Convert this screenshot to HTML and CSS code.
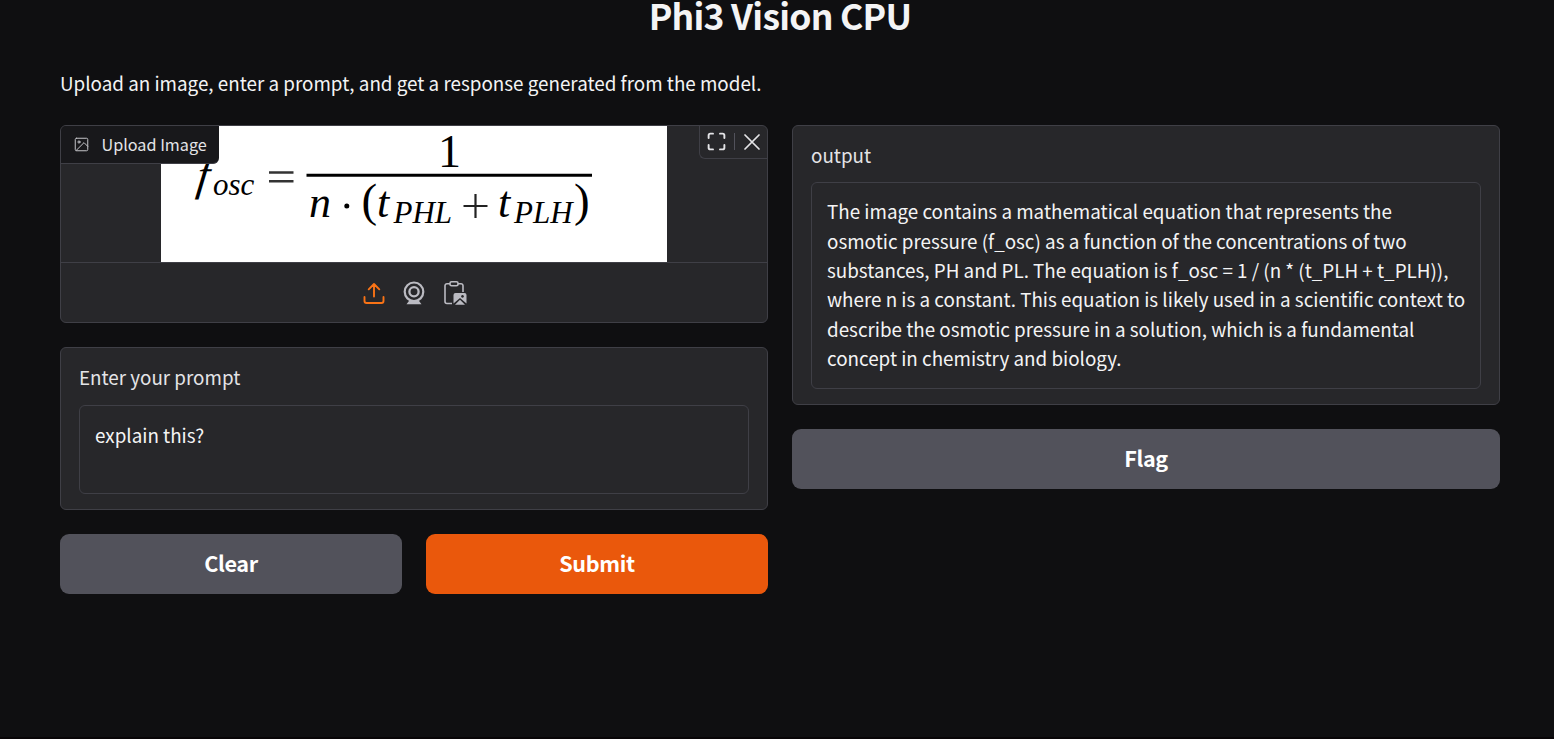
FILE: index.html
```html
<!DOCTYPE html>
<html lang="en">
<head>
<meta charset="utf-8">
<title>Phi3 Vision CPU</title>
<link rel="stylesheet" href="styles.css">
</head>
<body>
<main class="app">
  <h1 class="title"><span>Phi3 Vision CPU</span></h1>
  <p class="intro"><span>Upload an image, enter a prompt, and get a response generated from the model.</span></p>
  <div class="columns">
    <section class="column">
      <div class="block image-block">
        <div class="preview">
          <svg class="equation" viewBox="161 126 506 136" width="506" height="136">
            <rect x="161" y="126" width="506" height="136" fill="#fff"/>
            <g class="math">
              <text transform="translate(195.500 189.500) skewX(-7)" font-size="45">f</text>
              <text x="213" y="194.500" font-size="31">osc</text>
              <path d="M269 172.500h24.500M269 181.200h24.500" stroke="#333" stroke-width="2.400"/>
              <text class="upright" x="438" y="166.500" font-size="46">1</text>
              <path d="M306.500 175.300H592" stroke="#000" stroke-width="3"/>
              <text x="309" y="217" font-size="44">n</text>
              <circle cx="346.800" cy="206" r="2.500"/>
              <text class="upright" x="361.500" y="216" font-size="47">(</text>
              <text x="377" y="217" font-size="44">t</text>
              <text x="393.500" y="222.700" font-size="31">PHL</text>
              <path d="M463.500 206h24M475.500 194v24" stroke="#222" stroke-width="2.200"/>
              <text x="498" y="217" font-size="44">t</text>
              <text x="514" y="222.700" font-size="31">PLH</text>
              <text class="upright" x="574" y="216" font-size="47">)</text>
            </g>
          </svg>
          <div class="image-label">
            <svg width="15" height="15" viewBox="0 0 24 24" fill="none" stroke="currentColor" stroke-width="1.600" stroke-linecap="round" stroke-linejoin="round"><rect x="2" y="2" width="20" height="20" rx="2"/><circle cx="8" cy="8" r="1.700"/><path d="M22 15l-6-6L3.500 21.500"/></svg>
            <span>Upload Image</span>
          </div>
          <div class="image-tools">
            <svg width="21" height="21" viewBox="0 0 24 24" fill="none" stroke="currentColor" stroke-width="2.200" stroke-linecap="round" stroke-linejoin="round"><path d="M8 3H5a2 2 0 0 0-2 2v3M21 8V5a2 2 0 0 0-2-2h-3M16 21h3a2 2 0 0 0 2-2v-3M3 16v3a2 2 0 0 0 2 2h3"/></svg>
            <i class="divider"></i>
            <svg width="16" height="16" viewBox="0 0 16 16" fill="none" stroke="currentColor" stroke-width="1.700" stroke-linecap="round"><path d="M1 1l14 14M15 1L1 15"/></svg>
          </div>
        </div>
        <div class="sources">
          <svg class="active" width="24" height="24" viewBox="0 0 24 24" fill="none" stroke="currentColor" stroke-width="1.900" stroke-linecap="round" stroke-linejoin="round"><path d="M12 15.500V3M6.700 8.300L12 3l5.300 5.300M2.500 16v4a2 2 0 0 0 2 2h15a2 2 0 0 0 2-2v-4"/></svg>
          <svg width="24" height="24" viewBox="0 0 24 24" fill="none" stroke="currentColor"><circle cx="12" cy="10.800" r="9.300" stroke-width="2.200"/><circle cx="12" cy="10.800" r="4.600" stroke-width="2.300"/><path d="M7.500 19.200h9l3 4h-15z" fill="currentColor" stroke="none"/></svg>
          <svg width="24" height="24" viewBox="0 0 24 24" fill="none" stroke="currentColor" stroke-width="1.600" stroke-linejoin="round"><path d="M9 22.500H4a2 2 0 0 1-2-2V4.700a2 2 0 0 1 2-2h3M15 2.700h3a2 2 0 0 1 2 2V11"/><rect x="7" y=".8" width="8" height="4" rx="1.500"/><path fill="currentColor" stroke="none" fill-rule="evenodd" d="M12.500 12h9a2 2 0 0 1 2 2v8.500L17 17l-6.500 5.500V14a2 2 0 0 1 2-2zM19.500 14a1.400 1.400 0 1 0 .01 0zM17 18.700l5 5h-10z"/></svg>
        </div>
      </div>
      <div class="block field">
        <label class="label">Enter your prompt</label>
        <div class="textbox prompt">explain this?</div>
      </div>
      <div class="actions">
        <button class="button"><span>Clear</span></button>
        <button class="button primary"><span>Submit</span></button>
      </div>
    </section>
    <section class="column">
      <div class="block field output-field">
        <label class="label">output</label>
        <div class="textbox output">The image contains a mathematical equation that represents the<br>osmotic pressure (f_osc) as a function of the concentrations of two<br>substances, PH and PL. The equation is f_osc = 1 / (n * (t_PLH + t_PLH)),<br>where n is a constant. This equation is likely used in a scientific context to<br>describe the osmotic pressure in a solution, which is a fundamental<br>concept in chemistry and biology.</div>
      </div>
      <button class="button"><span>Flag</span></button>
    </section>
  </div>
</main>
</body>
</html>
```
FILE: styles.css
```css
* { box-sizing: border-box; }
html, body { height: 100%; }
body {
  margin: 0;
  overflow: hidden;
  background: #0f0f11;
  color: #f4f4f5;
  font-family: "Noto Sans CJK SC", "Noto Sans", sans-serif;
  font-size: 18.82px;
  line-height: 29.4px;
  border-bottom: 2px solid #080507;
}
.app { padding: 0 54px 0 60px; }
.title {
  margin: 0;
  height: 68px;
  font-size: 35.5px;
  line-height: 30px;
  letter-spacing: -0.75px;
  font-weight: 600;
  text-align: center;
}
.intro { margin: 0; height: 57px; white-space: nowrap; }
.columns { display: grid; grid-template-columns: 708px 708px; gap: 24px; }
.column { display: flex; flex-direction: column; gap: 24px; }
.block {
  background: #27272a;
  border: 1px solid #3f3f46;
  border-radius: 6px;
  overflow: hidden;
}
.image-block { height: 198px; }
.preview {
  position: relative;
  height: 137px;
  display: flex;
  justify-content: center;
  border-bottom: 1px solid #3f3f46;
}
.equation { display: block; }
.math { font-family: "Liberation Serif", serif; font-style: italic; fill: #000; }
.upright { font-style: normal; }
.image-label {
  position: absolute;
  top: 0;
  left: 0;
  width: 158px;
  height: 38px;
  display: flex;
  align-items: center;
  gap: 12.5px;
  padding-left: 13px;
  background: #18181b;
  color: #e4e4e7;
  border-bottom: 1px solid #3f3f46;
  border-radius: 0 0 6px 0;
  font-size: 16.2px;
  white-space: nowrap;
}
.image-label svg { flex: none; color: #c4c4c9; }
.image-tools {
  position: absolute;
  top: 0;
  right: 0;
  width: 68px;
  height: 33px;
  display: flex;
  align-items: center;
  padding: 0 0 1px 6px;
  color: #e4e4e7;
  border: 1px solid #3f3f46;
  border-width: 0 0 1px 1px;
  border-radius: 0 0 0 6px;
}
.divider { width: 1px; height: 17px; margin: 0 9px 0 6.5px; background: #52525b; }
.sources {
  display: flex;
  justify-content: center;
  gap: 16.5px;
  padding-top: 18px;
  color: #bbbbc2;
}
.sources .active { color: #f97316; }
.field { padding: 14px 18px 15px; }
.label { display: block; height: 43px; color: #e4e4e7; }
.textbox {
  border: 1px solid #3f3f46;
  border-radius: 6px;
  padding: 14px 15px;
  white-space: nowrap;
}
.prompt { height: 89px; }
.output-field .label { height: 42px; }
.output { height: 207px; padding-top: 13.2px; }
.actions { display: grid; grid-template-columns: 1fr 1fr; gap: 24px; }
.button {
  height: 60px;
  padding: 0 0 3px;
  border: 0;
  border-radius: 9px;
  background: #52525b;
  color: #fff;
  font-family: inherit;
  font-size: 21.6px;
  font-weight: 600;
  letter-spacing: -0.35px;
}
.primary { background: #ea580c; }
```
